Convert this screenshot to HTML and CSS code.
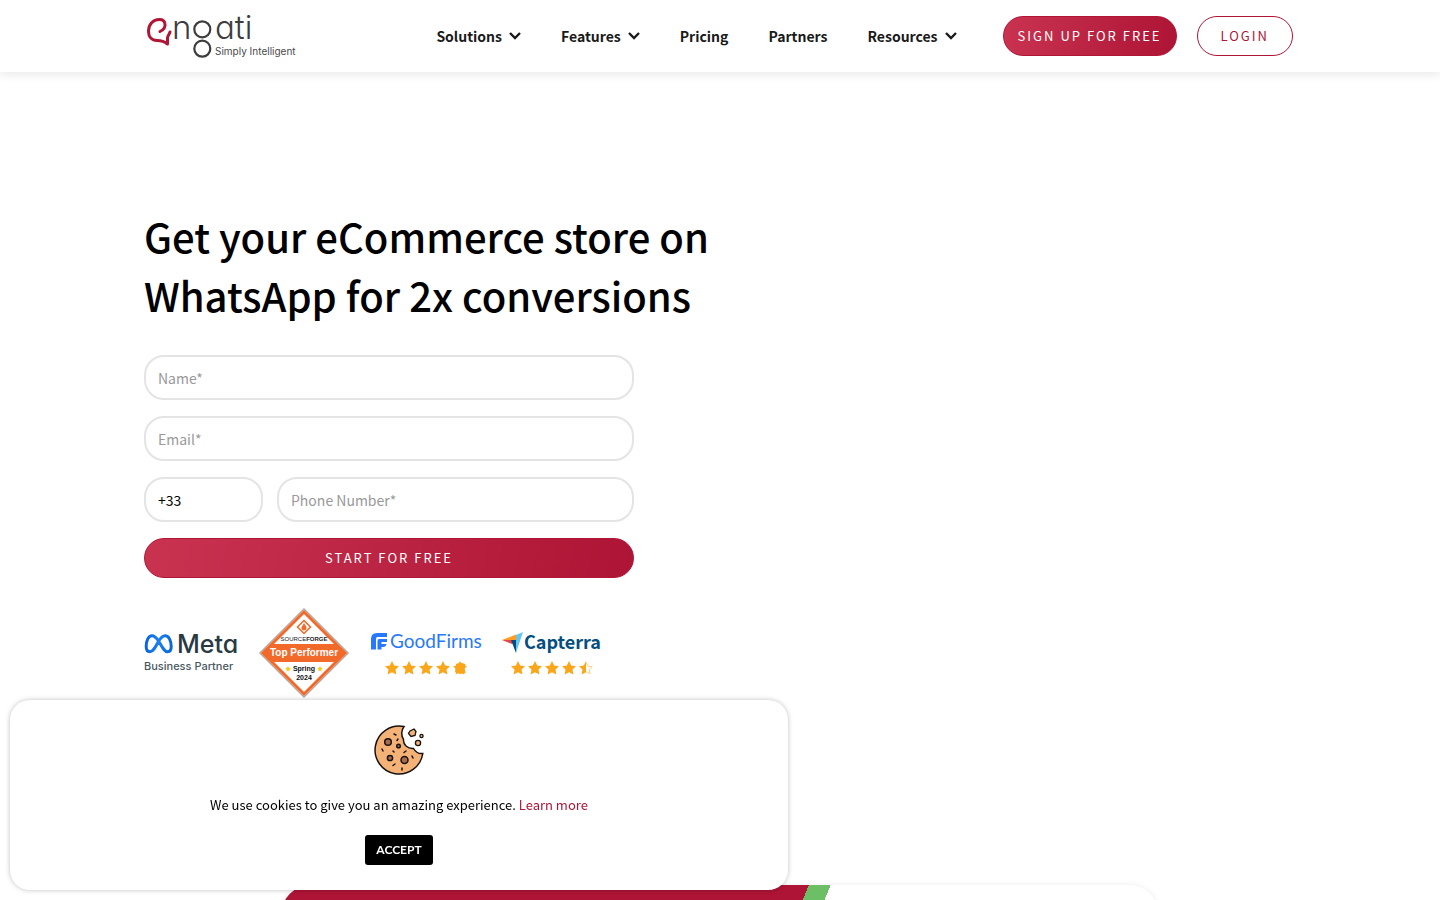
FILE: index.html
```html
<!DOCTYPE html>
<html lang="en">
<head>
    <meta charset="UTF-8">
    <meta name="viewport" content="width=device-width, initial-scale=1.0">
    <title>Engati - Simply Intelligent</title>
    <link rel="stylesheet" href="styles.css">
</head>
<body>
    <svg class="defs" width="0" height="0" aria-hidden="true">
        <symbol id="chevron" viewBox="0 0 12 8"><path d="M1 1l5 5 5-5" fill="none" stroke="currentColor" stroke-width="2.400"/></symbol>
        <symbol id="star" viewBox="0 0 14 14"><path d="M7 0l2.200 4.600 4.800.6-3.500 3.400.9 5L7 11.200l-4.400 2.400.9-5L0 5.200l4.800-.6z" fill="#faa61a"/></symbol>
    </svg>

    <header class="header">
        <a class="logo" href="#" aria-label="Engati">
            <svg width="156" height="48" viewBox="0 0 156 48">
                <path d="M16 19.500C19 18 21.500 15 21 12C20.500 8.500 18 7.500 15.500 7.500C8.500 7.500 4.500 13 4.500 19C4.500 25 8 28.500 13 28.500C18 28.500 20 29 23.500 32L23.500 26C24 23 25 23 26 20" fill="none" stroke="#b11536" stroke-width="3" stroke-linecap="round" stroke-linejoin="round"/>
                <text class="wordmark" x="28" y="27">n</text>
                <circle cx="58.300" cy="17.300" r="8" fill="none" stroke="#3d3d3f" stroke-width="2.200"/>
                <circle cx="58.300" cy="36.700" r="8" fill="none" stroke="#3d3d3f" stroke-width="2.200"/>
                <text class="wordmark" x="71" y="27">ati</text>
                <text class="tagline" x="71" y="43">Simply Intelligent</text>
            </svg>
        </a>
        <nav class="nav">
            <a href="#">Solutions <svg class="chevron"><use href="#chevron"/></svg></a>
            <a href="#">Features <svg class="chevron"><use href="#chevron"/></svg></a>
            <a href="#">Pricing</a>
            <a href="#">Partners</a>
            <a href="#">Resources <svg class="chevron"><use href="#chevron"/></svg></a>
        </nav>
        <div class="actions">
            <a class="btn btn-primary" href="#">SIGN UP FOR FREE</a>
            <a class="btn btn-outline" href="#">LOGIN</a>
        </div>
    </header>

    <main>
        <section class="hero">
            <h1>Get your eCommerce store on WhatsApp for 2x conversions</h1>
            <form class="signup">
                <input class="field" type="text" placeholder="Name*" aria-label="Name">
                <input class="field" type="email" placeholder="Email*" aria-label="Email">
                <div class="phone">
                    <input class="field code" type="text" value="+33" aria-label="Country code">
                    <input class="field" type="tel" placeholder="Phone Number*" aria-label="Phone Number">
                </div>
                <button class="btn btn-primary" type="button">START FOR FREE</button>
            </form>

            <div class="badges">
                <svg width="94" height="44" viewBox="0 0 94 44">
                    <defs>
                        <linearGradient id="metaBlue"><stop offset="0" stop-color="#0865e0"/><stop offset=".5" stop-color="#1c80f0"/><stop offset="1" stop-color="#0868d8"/></linearGradient>
                    </defs>
                    <path d="M14.500 10C11.500 5.500 10 4.800 8 4.800C4.500 4.800 2.200 9.500 2.200 15.500C2.200 19 3.500 20.800 6 20.800C9 20.800 11 17 14.500 10.500C17 6.500 18.500 4.800 21 4.800C25 4.800 27.200 10 27.200 15.500C27.200 19 26 20.800 23.500 20.800C20.500 20.800 18.500 17 14.500 10" fill="none" stroke="url(#metaBlue)" stroke-width="3"/>
                    <text class="meta-name" x="33" y="22">Meta</text>
                    <text class="meta-sub" x="0" y="39">Business Partner</text>
                </svg>

                <svg width="90" height="90" viewBox="0 0 90 90">
                    <path d="M45 1L89 45L45 89L1 45z" fill="#fff" stroke="#b8aaa0" stroke-width="1.500"/>
                    <path d="M45 4L86 45L45 86L4 45z" fill="#fff" stroke="#f26a2a" stroke-width="3"/>
                    <path d="M14 36H76L85 45L76 54H14L5 45z" fill="#f26a2a"/>
                    <path d="M45 12.500L51.500 19L45 25.500L38.500 19z" fill="none" stroke="#f26a2a" stroke-width="1.500"/>
                    <path d="M45 14.500C45.500 17 48 18 47.500 20.500C47 23 43 23 42.500 20.500C42.200 18 44.500 17.500 45 14.500z" fill="#f26a2a"/>
                    <text class="sf-name" x="45" y="33"><tspan class="sf-thin">SOURCE</tspan>FORGE</text>
                    <text class="sf-title" x="45" y="48">Top Performer</text>
                    <text class="sf-date" x="45" y="63">Spring</text>
                    <text class="sf-date" x="45" y="72">2024</text>
                    <path d="M29 58l.8 1.800 2 .2-1.500 1.400.4 2-1.700-1-1.700 1 .4-2-1.500-1.400 2-.2zM61 58l.8 1.800 2 .2-1.500 1.400.4 2-1.700-1-1.700 1 .4-2-1.500-1.400 2-.2z" fill="#fdc50b"/>
                </svg>

                <div class="rating">
                    <svg width="111" height="24" viewBox="0 0 111 24">
                        <path d="M7 2H17V6H7.500Q6 6 6 8V18.500H1V8Q1 2 7 2z" fill="#2878fc"/>
                        <path d="M9 8H17V11H11.500V13H16.500Q16 16 13 16H11.500V18.500H7.500V10Q7.500 8 9 8z" fill="#2878fc"/>
                        <text class="gf-name" x="20" y="17">GoodFirms</text>
                    </svg>
                    <div class="stars">
                        <svg><use href="#star"/></svg><svg><use href="#star"/></svg><svg><use href="#star"/></svg><svg><use href="#star"/></svg><svg viewBox="0 0 14 14"><use href="#star"/><path d="M3 3L7 1.500L12.500 3L11.500 7L12.500 12L7 13L2 11z" fill="#faa61a"/></svg>
                    </div>
                </div>

                <div class="rating">
                    <svg width="99" height="24" viewBox="0 0 99 24">
                        <path d="M0 9L14 3.500V9z" fill="#ff9d28"/>
                        <path d="M0 9H14L10 13z" fill="#e54747"/>
                        <path d="M9 9H15L14 22z" fill="#044d80"/>
                        <path d="M21 1L14 22V4z" fill="#68c5ed"/>
                        <text class="cap-name" x="22" y="18">Capterra</text>
                    </svg>
                    <div class="stars">
                        <svg><use href="#star"/></svg><svg><use href="#star"/></svg><svg><use href="#star"/></svg><svg><use href="#star"/></svg><svg viewBox="0 0 14 14"><path d="M7 0V11.200l-4.400 2.400.9-5L0 5.200l4.800-.6z" fill="#faa61a"/><path d="M7 1l2 4.200 4.200.5-3 2.800.8 4.300-4-2" fill="none" stroke="#fbc568" stroke-width=".8"/></svg>
                    </div>
                </div>
            </div>
        </section>

        <section class="banner">
            <div class="banner-red"></div>
        </section>
    </main>

    <aside class="cookies">
        <svg width="50" height="50" viewBox="0 0 50 50">
            <path d="M30 1.500A24 24 0 1 0 48.800 28.500C45 29 41.500 27 39.500 23.500C34 24 29 20 29.500 14.500C27 10 27.500 5 30 1.500z" fill="#f4b277" stroke="#17120f" stroke-width="1.500"/>
            <g fill="#a9694b" stroke="#17120f" stroke-width="1.500">
                <circle cx="14" cy="17" r="3.300"/>
                <circle cx="24.500" cy="21" r="1.800"/>
                <circle cx="16" cy="33" r="2.600"/>
                <circle cx="30.500" cy="35" r="3.500"/>
            </g>
            <g fill="#f4b277" stroke="#17120f" stroke-width="1.300">
                <path d="M36 6L40 4L42 6.500L41 10.500L37 11.500L34.500 8.500z"/>
                <circle cx="47.500" cy="11" r="1.600"/>
                <circle cx="44" cy="18" r="2.600"/>
            </g>
            <path d="M20 9l2 1M24 14l-1 1.500M8 24l1 2M19 26l1 1M32 26l-2 1.500M38 31l1 2M21 39l-2 1.500M28 43v2" stroke="#17120f" stroke-width="1.500" stroke-linecap="round"/>
        </svg>
        <p>We use cookies to give you an amazing experience. <a href="#">Learn more</a></p>
        <button class="accept" type="button">ACCEPT</button>
    </aside>
</body>
</html>
```
FILE: styles.css
```css
* { box-sizing: border-box; margin: 0; padding: 0; }
body {
    font-family: "Noto Sans CJK SC", "Noto Sans", sans-serif;
    font-size: 14px; color: #000; background: #fff;
}
a { text-decoration: none; color: inherit; }
.defs { position: absolute; }

.header {
    display: flex; align-items: center; height: 72px; padding: 0 147px 0 10%;
    background: #fff; box-shadow: 0 2px 10px rgba(0,0,0,0.1);
}
.logo svg { display: block; overflow: visible; }
.wordmark {
    font-family: Inter, sans-serif; font-size: 33px; font-weight: 300;
    font-feature-settings: "cv11"; fill: #3d3d3f;
}
.tagline { font-family: Inter, sans-serif; font-size: 10px; fill: #4a4a4c; }
.nav {
    display: flex; gap: 40px; margin-left: auto;
    font-size: 14px; font-weight: 700; color: #1a1a1a;
}
.nav a { display: flex; align-items: center; gap: 7px; }
.chevron { width: 12px; height: 8px; }
.actions { display: flex; gap: 20px; margin-left: 46px; }

.btn {
    display: flex; align-items: center; justify-content: center;
    height: 40px; padding: 0 14px 2px; border: 1px solid #b11536; border-radius: 20px;
    font-family: inherit; font-size: 13px; letter-spacing: 2px; cursor: pointer;
}
.btn-primary { color: #fff; background: linear-gradient(100deg, #c93350, #ae1435); }
.btn-outline { padding: 0 23px 2px; color: #b11536; background: #fff; }

.hero { padding: 135px 10% 187px; }
h1 { max-width: 600px; font-size: 40px; line-height: 59px; font-weight: 500; }
.signup { display: flex; flex-direction: column; gap: 16px; max-width: 490px; margin-top: 30px; }
.field {
    width: 100%; height: 45px; padding: 0 12px;
    border: 2px solid #e4e4e4; border-radius: 20px; background: #fff;
    font-family: inherit; font-size: 14px; color: #000;
}
.field::placeholder { color: #999; }
.phone { display: flex; gap: 14px; }
.code { flex: 0 0 119px; }

.badges { display: flex; align-items: center; gap: 21px; margin-top: 30px; }
.badges svg { overflow: visible; }
.badges text { font-family: Inter, sans-serif; }
.badges .meta-name { font-size: 25px; font-weight: 500; font-feature-settings: "cv11"; fill: #283943; }
.badges .meta-sub { font-size: 11px; font-weight: 500; fill: #4a5860; }
.badges .sf-name, .badges .sf-title, .badges .sf-date { font-family: "Liberation Sans", sans-serif; font-weight: bold; text-anchor: middle; }
.badges .sf-name { font-size: 6px; fill: #222; }
.badges .sf-thin { font-weight: normal; }
.badges .sf-title { font-size: 10px; fill: #fff; }
.badges .sf-date { font-size: 7px; fill: #111; }
.badges .gf-name { font-family: Lato, sans-serif; font-size: 19px; fill: #2878fc; }
.badges .cap-name { font-family: "Noto Sans CJK SC", sans-serif; font-size: 18px; font-weight: 700; fill: #044d80; }
.rating { display: flex; flex-direction: column; align-items: center; gap: 6px; }
.stars { display: flex; gap: 3px; }
.stars svg { width: 14px; height: 14px; }

.banner {
    width: 61%; height: 400px; margin: 0 auto; overflow: hidden;
    border-radius: 30px; box-shadow: 0 0 6px rgba(0,0,0,0.08);
}
.banner-red { height: 100%; background: linear-gradient(113deg, #ae1435 0 486px, #6cbf64 486px 506px, #fff 506px); }

.cookies {
    position: fixed; left: 10px; bottom: 10px; width: 778px; max-width: calc(100% - 20px);
    display: flex; flex-direction: column; align-items: center; padding: 25px 20px;
    border-radius: 20px; background: #fff; box-shadow: 0 0 5px rgba(0,0,0,0.25);
}
.cookies p { margin: 20px 0; font-size: 13px; line-height: 20px; }
.cookies p a { color: #ae1435; }
.accept {
    height: 30px; padding: 0 11px 2px; border: 0; border-radius: 3px;
    background: #000; color: #fff; font-family: Lato, sans-serif; font-size: 12px; font-weight: 700;
}
```
